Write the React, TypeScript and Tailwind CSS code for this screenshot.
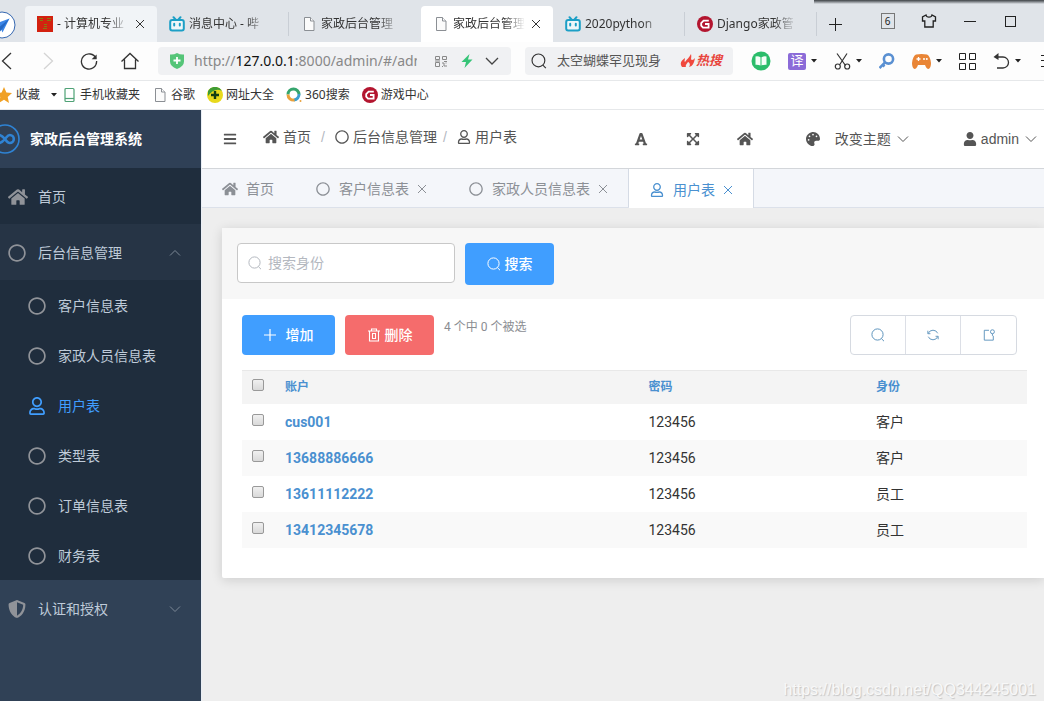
import { useState, type ReactNode } from "react";
import {
  FaBars,
  FaExpandArrowsAlt,
  FaFont,
  FaHome,
  FaPalette,
  FaRegCircle,
  FaRegUser,
  FaShieldAlt,
  FaUser,
} from "react-icons/fa";

type BrowserTab = { id: number; label: string; icon: ReactNode; closable?: boolean; state?: string };
type Row = { account: string; password: string; role: string };

const rows: Row[] = [
  { account: "cus001", password: "123456", role: "客户" },
  { account: "13688886666", password: "123456", role: "客户" },
  { account: "13611112222", password: "123456", role: "员工" },
  { account: "13412345678", password: "123456", role: "员工" },
];

const subMenu = ["客户信息表", "家政人员信息表", "用户表", "类型表", "订单信息表", "财务表"];

function Caret() {
  return (
    <svg viewBox="0 0 6 4" className="h-1 w-1.5" fill="#222">
      <path d="M0 0h6L3 3.6z" />
    </svg>
  );
}

function Close({ className }: { className?: string }) {
  return (
    <svg viewBox="0 0 10 10" className={className} fill="none" stroke="currentColor">
      <path d="M1 1l8 8M9 1L1 9" />
    </svg>
  );
}

function Chevron({ className }: { className?: string }) {
  return (
    <svg viewBox="0 0 12 8" className={className} fill="none" stroke="currentColor">
      <path d="M1 1.5l5 5 5-5" />
    </svg>
  );
}

function SearchIcon({ className }: { className?: string }) {
  return (
    <svg viewBox="0 0 14 14" className={className} fill="none" stroke="currentColor">
      <circle cx="6.5" cy="6.5" r="5.6" />
      <path d="M10.4 10.6l2.600 2.600" />
    </svg>
  );
}

function DocIcon() {
  return (
    <svg viewBox="0 0 16 16" className="h-4 w-4 shrink-0" fill="#fbfbfb" stroke="#8b8f94">
      <path d="M3.5 1.5h6l3.500 3.500v9.500h-9.500z" />
      <path d="M9.500 1.500v3.500h3.500" />
    </svg>
  );
}

function TvIcon() {
  return (
    <svg viewBox="0 0 16 16" className="h-4 w-4 shrink-0" fill="none" stroke="#1c9fc6" strokeWidth="2" strokeLinecap="round">
      <rect x="1.200" y="4" width="13.600" height="10.500" rx="2" fill="#eef6f9" />
      <path d="M4.500 1.200L6.500 3.500M11.500 1.200L9.500 3.500M5.200 7.800v1.600M10.800 7.800v1.600" />
    </svg>
  );
}

function GIcon() {
  return (
    <svg viewBox="0 0 16 16" className="h-4 w-4 shrink-0">
      <circle cx="8" cy="8" r="8" fill="#b3152f" />
      <path d="M11.800 4.600H6.600L4.200 7v2.600l1.800 2h5.600V8H8" fill="none" stroke="#fff" strokeWidth="1.800" />
    </svg>
  );
}

function RedSquare() {
  return (
    <svg viewBox="0 0 16 16" className="h-4 w-4 shrink-0">
      <path d="M0 0h16v16H0z" fill="#d3210f" />
      <path d="M2 2h4v1H2zM3 4h3v1H3zM10 2h4v1h-4zM10 4h4v1h-4zM7 8h3v1H7zM7 10h3v1H7zM6 12h4v1H6z" fill="#8a7a10" />
    </svg>
  );
}

const browserTabs: BrowserTab[] = [
  { id: 1, label: "- 计算机专业", icon: <RedSquare />, closable: true, state: "hover" },
  { id: 2, label: "消息中心 - 哔", icon: <TvIcon /> },
  { id: 3, label: "家政后台管理", icon: <DocIcon /> },
  { id: 4, label: "家政后台管理", icon: <DocIcon />, closable: true, state: "active" },
  { id: 5, label: "2020python", icon: <TvIcon /> },
  { id: 6, label: "Django家政管", icon: <GIcon /> },
];

function TabStrip() {
  return (
    <div className="relative flex h-[42px] overflow-hidden bg-[#e0e4e9] text-[#333]">
      <div className="absolute top-0 right-0 left-[78%] h-1 bg-linear-to-b from-[#3f4347] to-[#e0e4e9]" />
      <div className="-ml-3 w-[37px] shrink-0 pt-[11px]">
        <svg viewBox="0 0 28 28" className="h-7 w-7">
          <circle cx="14" cy="14" r="13" fill="#fff" stroke="#3567b0" />
          <path d="M21.500 7.500L7 13l5 2.500 2.500 6z" fill="#3b86e8" />
          <path d="M21.500 7.500L12 15.500v5l2.200-2.500z" fill="#2468c4" />
        </svg>
      </div>
      {browserTabs.map((t) => (
        <div
          key={t.id}
          className={[
            "mt-1.5 flex w-[132px] shrink-0 items-center gap-1 rounded-t-sm pl-3",
            t.state === "active" ? "bg-white" : t.state === "hover" ? "bg-[#f1f4f7]" : "",
          ].join(" ")}
        >
          {t.icon}
          <button
            className={[
              "shrink-0 overflow-hidden text-left text-xs whitespace-nowrap [mask-image:linear-gradient(to_right,black_70%,transparent)]",
              t.closable ? "w-[72px]" : "w-20",
            ].join(" ")}
          >
            {t.label}
          </button>
          {t.closable ? (
            <button aria-label="关闭">
              <Close className="ml-0.5 h-2.5 w-2.5" />
            </button>
          ) : (
            t.id !== 3 && <span className="ml-auto h-6 w-px bg-[#c9ced5]" />
          )}
        </div>
      ))}
      <button aria-label="新标签页" className="flex w-9 shrink-0 items-center justify-center pt-1.5 text-[#222]">
        <svg viewBox="0 0 14 14" className="h-3.5 w-3.5" stroke="currentColor">
          <path d="M7.500 1v13M1 7.500h13" />
        </svg>
      </button>
      <div className="-mr-7 ml-auto flex h-[42px] shrink-0 items-center text-[#222] *:flex *:w-[41px] *:items-center *:justify-center">
        <button>
          <span className="flex h-4 w-3.5 items-center justify-center border border-[#777] text-[10px]">6</span>
        </button>
        <button aria-label="皮肤">
          <svg viewBox="0 0 16 16" className="h-4 w-4" fill="none" stroke="currentColor" strokeWidth="1.300">
            <path d="M5 2L1.500 4v4h2.300v6h8.400V8h2.300V4L11 2c-.5 2.800-5.500 2.800-6 0z" />
          </svg>
        </button>
        <button aria-label="最小化">
          <span className="h-px w-3 bg-[#222]" />
        </button>
        <button aria-label="最大化">
          <span className="h-[11px] w-[11px] border border-[#222]" />
        </button>
        <button aria-label="关闭窗口">
          <Close className="h-4 w-4" />
        </button>
      </div>
    </div>
  );
}

function AddressBar() {
  return (
    <div className="flex h-[39px] items-center overflow-hidden border-b border-[#e6e8ea] bg-[#fdfdfd] text-[#333]">
      <div className="-ml-3.5 mr-2 flex shrink-0 *:flex *:w-[41px] *:justify-center">
        <button aria-label="后退">
          <svg viewBox="0 0 18 18" className="h-[18px] w-[18px]" fill="none" stroke="#333" strokeWidth="1.300">
            <path d="M13 1L4.500 9l8.500 8" />
          </svg>
        </button>
        <button aria-label="前进">
          <svg viewBox="0 0 18 18" className="h-[18px] w-[18px]" fill="none" stroke="#d4d4d4" strokeWidth="1.300">
            <path d="M5 1l8.500 8L5 17" />
          </svg>
        </button>
        <button aria-label="刷新">
          <svg viewBox="0 0 18 18" className="h-[18px] w-[18px]" fill="none" stroke="#333" strokeWidth="1.300">
            <path d="M16 6.500A7.600 7.600 0 1 0 16.600 9" />
            <path d="M16.600 2.500v4.700h-5z" fill="#333" strokeWidth="0" />
          </svg>
        </button>
        <button aria-label="主页">
          <svg viewBox="0 0 18 18" className="h-[18px] w-[18px]" fill="none" stroke="#333" strokeWidth="1.300">
            <path d="M.5 9.500L9 1.500l8.500 8M3.500 7.500v9h11v-9" />
          </svg>
        </button>
      </div>
      <div className="flex h-7 min-w-0 flex-1 items-center rounded bg-[#f0f1f3] px-3">
        <svg viewBox="0 0 14 16" className="h-4 w-3.5 shrink-0">
          <path d="M0 1.500Q4 1.800 7 0q3 1.800 7 1.500v7Q14 13 7 16 0 13 0 8.500z" fill="#55c578" />
          <path d="M7 4v7M3.500 7.500h7" stroke="#fff" strokeWidth="1.800" />
        </svg>
        <div className="ml-2.5 w-[223px] overflow-hidden text-sm whitespace-nowrap text-[#888]">
          http://<span className="text-[#111]">127.0.0.1</span>:8000/admin/#/admin
        </div>
        <svg viewBox="0 0 12 12" className="ml-auto h-3 w-3 shrink-0" fill="none" stroke="#888">
          <path d="M.5 1.500h4v3h-4zM7.500 1.500h4v3h-4zM.5 7.500h4v4h-4zM7 8h2v3h3M9 6.500h3M0 6h5M7 11.500h1M10.500 8h1" />
        </svg>
        <svg viewBox="0 0 12 14" className="ml-3.5 h-3.5 w-3 shrink-0" fill="#36c477">
          <path d="M8.500 0L.5 8H5l-1.500 6L11.500 5.500H7z" />
        </svg>
        <svg viewBox="0 0 14 8" className="ml-3 h-2 w-3.5 shrink-0" fill="none" stroke="#444" strokeWidth="1.300">
          <path d="M1 1l6 6 6-6" />
        </svg>
      </div>
      <div className="ml-3.5 flex h-7 w-52 shrink-0 items-center rounded bg-[#f0f1f3] pl-1.5">
        <SearchIcon className="h-4 w-4 text-[#333]" />
        <input
          aria-label="搜索网页"
          defaultValue="太空蝴蝶罕见现身"
          className="ml-2.5 w-[121px] bg-transparent text-[13px] text-[#555] outline-none"
        />
        <svg viewBox="0 0 16 14" className="ml-0.5 h-3.5 w-4" fill="#f0493e">
          <path d="M2 13C-1 9 2 6 5 4c0 2-1 3 0 4 2-3 4-4 6-8 1 4-1 5 1 6 1 0 2-1 3-2-1 5-2 8-6 9 2-3 0-5-1-5-1 2-3 3-2 5z" />
        </svg>
        <span className="text-[13px] font-bold text-[#e8453c] italic">热搜</span>
      </div>
      <div className="-mr-2.5 ml-[18px] flex shrink-0 items-center gap-[17px] *:flex *:items-center *:gap-[5px]">
        <button aria-label="阅读">
          <svg viewBox="0 0 20 20" className="h-5 w-5">
            <circle cx="10" cy="10" r="9.500" fill="#2bbd6b" />
            <path d="M4.500 5.500q3-.5 5 .8v8.200q-2-1-5-.8zM15.500 5.500q-3-.5-5 .8v8.200q2-1 5-.8z" fill="#f4fff8" />
          </svg>
        </button>
        <button>
          <span className="flex h-[17px] w-[18px] items-center justify-center rounded-xs bg-[#8b6bd8] text-[13px] text-white">
            译
          </span>
          <Caret />
        </button>
        <button aria-label="截图">
          <svg viewBox="0 0 17 17" className="h-[17px] w-[17px]" fill="none" stroke="#333" strokeWidth="1.200">
            <path d="M3 .5l8.500 12M13 .5L5.500 12" />
            <circle cx="3.800" cy="13.500" r="2.500" />
            <circle cx="13.200" cy="13.500" r="2.500" />
          </svg>
          <Caret />
        </button>
        <button aria-label="密码">
          <svg viewBox="0 0 16 16" className="h-4 w-4" fill="none" stroke="#5a90d2" strokeWidth="2.600">
            <circle cx="9.500" cy="6" r="4.600" />
            <path d="M6.300 9.200L.5 15M3 11l2.500 2.500" />
          </svg>
        </button>
        <button aria-label="游戏">
          <svg viewBox="0 0 19 15" className="h-[15px] w-[19px]">
            <path d="M4 .5q5.500-1 11 0 3 1 4 8.500 0 5-2.500 6-2 0-3.500-4H6q-1.500 4-3.500 4Q0 14 0 9 1 1.500 4 .5z" fill="#e98536" />
            <path d="M6.500 3v4M4.500 5h4" stroke="#fff" strokeWidth="1.300" />
            <circle cx="12" cy="5" r="1" fill="#fff" />
            <circle cx="14.800" cy="5" r="1" fill="#fff" />
          </svg>
          <Caret />
        </button>
        <button aria-label="应用">
          <svg viewBox="0 0 17 17" className="h-[17px] w-[17px]" fill="none" stroke="#222">
            <path d="M.5.5h6v6h-6zM10.500.5h6v6h-6zM.5 10.500h6v6h-6zM10.500 10.500h6v6h-6z" />
          </svg>
        </button>
        <button aria-label="撤销">
          <svg viewBox="0 0 17 16" className="h-4 w-[17px]" fill="none" stroke="#333" strokeWidth="1.300">
            <path d="M2 4h8a5.500 5.500 0 0 1 0 11H4" />
            <path d="M5.500 0v7L.5 4z" fill="#333" strokeWidth="0" />
          </svg>
          <Caret />
        </button>
        <button aria-label="菜单">
          <svg viewBox="0 0 16 14" className="h-3.5 w-4" stroke="#222">
            <path d="M3 1.500h13M3 6.500h13M3 12.500h13" />
          </svg>
        </button>
      </div>
    </div>
  );
}

function Bookmarks() {
  return (
    <nav className="flex h-[29px] items-center overflow-hidden border-b border-[#e6e8ea] bg-white text-xs text-[#333]">
      <div className="-ml-[5px] flex shrink-0 items-center gap-3 *:flex *:items-center *:gap-[3px]">
        <a href="#fav">
          <svg viewBox="0 0 18 16" className="h-4 w-[18px]" fill="#f0a024">
            <path d="M9 0l2.400 5.500 5.600.5-4.300 4 1.300 6L9 12.800 4 16l1.300-6L1 6l5.600-.5z" />
          </svg>
          收藏
          <span className="ml-2">
            <Caret />
          </span>
        </a>
        <a href="#mobile" className="-ml-2">
          <svg viewBox="0 0 16 16" className="h-4 w-4" fill="#fff" stroke="#4fa276" strokeWidth="1.200">
            <rect x="4" y="1.500" width="9" height="13" rx="1" />
            <path d="M4 11.500h9" />
          </svg>
          手机收藏夹
        </a>
        <a href="#google">
          <DocIcon />
          谷歌
        </a>
        <a href="#sites">
          <svg viewBox="0 0 16 16" className="h-4 w-4">
            <circle cx="8" cy="8" r="8" fill="#e8d91c" />
            <path d="M1 4A8 8 0 0 1 15 4Q8 0 1 9z" fill="#3e9b35" />
            <path d="M8 4v8M4 8h8" stroke="#123d14" strokeWidth="2.400" />
          </svg>
          网址大全
        </a>
        <a href="#so">
          <svg viewBox="0 0 16 16" className="h-4 w-4" fill="none" strokeWidth="3">
            <path d="M2 7.500A5.500 5.500 0 0 1 13 7.500" stroke="#35a56d" />
            <path d="M13 7A5.500 5.500 0 0 1 8 13" stroke="#3c9fd0" />
            <path d="M8.500 13A5.500 5.500 0 0 1 2 7.500" stroke="#e9a13b" />
            <circle cx="14.500" cy="14" r="1" fill="#e9a13b" strokeWidth="0" />
          </svg>
          360搜索
        </a>
        <a href="#games">
          <GIcon />
          游戏中心
        </a>
      </div>
    </nav>
  );
}

function Sidebar() {
  return (
    <aside className="flex w-[201px] shrink-0 flex-col bg-[#304156] text-sm text-[#bfcbd9]">
      <div className="flex h-[58px] items-center overflow-hidden bg-[#2f4056]">
        <svg viewBox="0 0 30 30" className="-ml-2.5 h-[30px] w-[30px] shrink-0" fill="none" stroke="#2f83d4">
          <circle cx="15" cy="15" r="14" strokeWidth="1.600" />
          <path
            d="M15 15c-2.500-3-4-4-6-4a4 4 0 0 0 0 8c2 0 3.500-1 6-4s3-4 4.800-4a4 4 0 0 1 0 8c-1.800 0-2.800-1-4.800-4z"
            strokeWidth="2.600"
          />
        </svg>
        <span className="ml-2.5 font-bold text-white">家政后台管理系统</span>
      </div>
      <a href="#home" className="flex h-14 items-center gap-2.5 bg-[#1f2d3d] pt-0.5 pl-2">
        <FaHome className="h-5 w-5 text-[#909399]" />
        首页
      </a>
      <button className="flex h-14 items-center gap-3 bg-[#263445] pt-0.5 pr-5 pl-2">
        <FaRegCircle className="h-[18px] w-[18px] text-[#909399]" />
        后台信息管理
        <Chevron className="ml-auto h-2 w-3 rotate-180 text-[#7c8896]" />
      </button>
      <ul className="bg-[#1f2d3d]">
        {subMenu.map((name) => {
          const active = name === "用户表";
          return (
            <li key={name}>
              <a
                href="#table"
                className={["flex h-[50px] items-center gap-3 pt-0.5 pl-7", active ? "text-[#409eff]" : ""].join(" ")}
              >
                {active ? (
                  <FaRegUser className="h-[18px] w-[18px]" />
                ) : (
                  <FaRegCircle className="h-[18px] w-[18px] text-[#909399]" />
                )}
                {name}
              </a>
            </li>
          );
        })}
      </ul>
      <button className="flex h-14 items-center gap-3 pt-0.5 pr-5 pl-2">
        <FaShieldAlt className="h-[18px] w-[18px] text-[#909399]" />
        认证和授权
        <Chevron className="ml-auto h-2 w-3 text-[#7c8896]" />
      </button>
    </aside>
  );
}

function TopBar() {
  return (
    <header className="flex h-[59px] items-center border-b border-[#d3d6da] bg-white pl-[21px] text-sm text-[#555]">
      <button aria-label="折叠菜单">
        <FaBars className="h-3.5 w-3.5" />
      </button>
      <nav className="ml-[26px] flex items-center gap-2 pb-1">
        <a href="#home" className="flex items-center gap-1">
          <FaHome className="h-4 w-4" />
          首页
        </a>
        <span className="w-2 text-center text-[#b4b8bf]">/</span>
        <a href="#info" className="flex items-center gap-1">
          <FaRegCircle className="h-3.5 w-3.5" />
          后台信息管理
        </a>
        <span className="-mx-1 w-2 text-center text-[#b4b8bf]">/</span>
        <a href="#table" className="ml-1 flex items-center gap-1">
          <FaRegUser className="h-3.5 w-3.5" />
          用户表
        </a>
      </nav>
      <div className="ml-auto flex items-center pr-[7px]">
        <button aria-label="字体" className="flex w-[52px] justify-center">
          <FaFont className="h-3.5 w-3.5" />
        </button>
        <button aria-label="全屏" className="flex w-[52px] justify-center">
          <FaExpandArrowsAlt className="h-3.5 w-3.5" />
        </button>
        <button aria-label="主页" className="flex w-[52px] justify-center">
          <FaHome className="h-4 w-4" />
        </button>
        <button className="ml-[34px] flex items-center">
          <FaPalette className="mr-3.5 h-3.5 w-4" />
          改变主题
          <Chevron className="ml-1.5 h-2 w-3" />
        </button>
        <button className="ml-[54px] flex items-center font-['Liberation_Sans',sans-serif]">
          <FaUser className="mr-1 h-3.5 w-3.5" />
          admin
          <Chevron className="ml-1.5 h-2 w-3" />
        </button>
      </div>
    </header>
  );
}

function PageTabs() {
  const tabs = [
    { label: "首页", icon: <FaHome className="h-4 w-4" />, closable: false },
    { label: "客户信息表", icon: <FaRegCircle className="h-3.5 w-4" />, closable: true },
    { label: "家政人员信息表", icon: <FaRegCircle className="h-3.5 w-4" />, closable: true },
    { label: "用户表", icon: <FaRegUser className="h-3.5 w-4" />, closable: true },
  ];
  return (
    <div className="flex h-[39px] border-b border-[#dce1ea] bg-[#f4f6fa] text-sm text-[#8c9096]">
      {tabs.map((t) => {
        const active = t.label === "用户表";
        return (
          <div
            key={t.label}
            className={[
              "flex items-center border-r px-5 pt-0.5",
              active ? "-mb-px border-[#d5dbe5] bg-white text-[#4a90d0]" : "border-transparent",
              t.label === "家政人员信息表" ? "border-r-[#d5dbe5]" : "",
            ].join(" ")}
          >
            <button className="flex items-center gap-2">
              {t.icon}
              {t.label}
            </button>
            {t.closable && (
              <button aria-label="关闭" className="ml-2">
                <Close className="h-2.5 w-2.5" />
              </button>
            )}
          </div>
        );
      })}
    </div>
  );
}

const boxClass =
  "block h-3 w-3 appearance-none rounded-xs border border-[#999] bg-linear-to-b from-[#f0f0f0] to-[#d9d9d9] checked:from-[#409eff] checked:to-[#409eff]";

function UserTable({ selected, onChange }: { selected: string[]; onChange: (s: string[]) => void }) {
  const toggle = (account: string) =>
    onChange(selected.includes(account) ? selected.filter((a) => a !== account) : [...selected, account]);

  return (
    <table className="mt-[15px] w-full table-fixed border-collapse text-left text-sm text-[#333]">
      <thead>
        <tr className="h-[33px] border-t border-[#e8e8e8] bg-[#f4f4f4] text-xs text-[#4a90d0]">
          <th className="w-[33px] pb-1 pl-2.5">
            <input
              type="checkbox"
              aria-label="全选"
              className={boxClass}
              checked={selected.length === rows.length}
              onChange={(e) => onChange(e.target.checked ? rows.map((r) => r.account) : [])}
            />
          </th>
          <th className="px-2.5">账户</th>
          <th className="w-[29%] px-2.5">密码</th>
          <th className="w-[20.500%] px-2.5">身份</th>
        </tr>
      </thead>
      <tbody>
        {rows.map((r) => (
          <tr key={r.account} className="h-9 even:bg-[#f9f9f9]">
            <td className="pb-1 pl-2.5">
              <input
                type="checkbox"
                aria-label={r.account}
                className={boxClass}
                checked={selected.includes(r.account)}
                onChange={() => toggle(r.account)}
              />
            </td>
            <td className="px-2.5">
              <a href="#edit" className="font-bold text-[#4a90d0]">
                {r.account}
              </a>
            </td>
            <td className="px-2.5">{r.password}</td>
            <td className="px-2.5">{r.role}</td>
          </tr>
        ))}
      </tbody>
    </table>
  );
}

function UserPanel() {
  const [query, setQuery] = useState("");
  const [selected, setSelected] = useState<string[]>([]);

  return (
    <section className="mt-5 ml-5 rounded-l-xs bg-white pb-[30px] font-[Roboto,'Noto_Sans_CJK_SC',sans-serif] shadow-[0_2px_12px_rgba(0,0,0,0.14)]">
      <form className="flex h-[71px] gap-2.5 bg-[#f7f7f7] pt-[15px] pl-[15px]" onSubmit={(e) => e.preventDefault()}>
        <label className="flex h-10 w-[218px] items-center gap-1.5 rounded border border-[#c8c8c8] bg-white pl-2.5 text-[#b4b8bf]">
          <SearchIcon className="h-3.5 w-3.5 shrink-0" />
          <input
            value={query}
            onChange={(e) => setQuery(e.target.value)}
            placeholder="搜索身份"
            aria-label="搜索身份"
            className="w-full bg-transparent text-sm text-[#333] outline-none placeholder:text-[#b4b8bf]"
          />
        </label>
        <button className="flex h-[42px] w-[89px] items-center justify-center gap-1 rounded bg-[#409eff] text-sm font-medium text-white">
          <SearchIcon className="h-3.5 w-3.5" />
          搜索
        </button>
      </form>

      <div className="pt-4 pr-[17px] pl-5">
        <div className="flex gap-2.5">
          <button className="flex h-10 w-[93px] items-center justify-center gap-2.5 rounded bg-[#409eff] text-sm font-medium text-white">
            <svg viewBox="0 0 12 12" className="h-3 w-3" stroke="currentColor" strokeWidth="1.200">
              <path d="M6 0v12M0 6h12" />
            </svg>
            增加
          </button>
          <button className="flex h-10 w-[89px] items-center justify-center gap-1 rounded bg-[#f56c6c] text-sm font-medium text-white">
            <svg viewBox="0 0 14 14" className="h-3.5 w-3.5" fill="none" stroke="currentColor" strokeWidth="1.100">
              <path d="M1 3h12M4.500 3V1h5v2M2.500 3v10h9V3M5.500 5.500h3v5h-3z" />
            </svg>
            删除
          </button>
          <span className="pt-1 text-xs text-[#8a8d92]">
            {rows.length} 个中 {selected.length} 个被选
          </span>
          <div className="mr-2.5 ml-auto flex h-10 divide-x divide-[#dcdfe6] rounded border border-[#d6dae1] text-[#5e94bd] *:flex *:w-[55px] *:items-center *:justify-center">
            <button aria-label="搜索">
              <SearchIcon className="h-3.5 w-3.5" />
            </button>
            <button aria-label="刷新">
              <svg viewBox="0 0 14 14" className="h-3 w-3" fill="none" stroke="currentColor" strokeWidth="1.100">
                <path d="M1 2v3.500h3M1.500 5a6 6 0 0 1 11 0M13 12V8.500h-3M12.500 9a6 6 0 0 1-11 0" />
              </svg>
            </button>
            <button aria-label="导出">
              <svg viewBox="0 0 14 14" className="h-3 w-3" fill="none" stroke="currentColor" strokeWidth="1.100">
                <path d="M7 1.500H1.500v11.500h10.500V8" />
                <circle cx="11" cy="3.200" r="2.300" />
                <path d="M11 5.500V8" />
              </svg>
            </button>
          </div>
        </div>
        <UserTable selected={selected} onChange={setSelected} />
      </div>
    </section>
  );
}

export default function App() {
  return (
    <div className="relative flex min-h-screen flex-col overflow-hidden bg-white font-['Noto_Sans','Noto_Sans_CJK_SC',sans-serif]">
      <TabStrip />
      <AddressBar />
      <Bookmarks />
      <div className="flex flex-1 font-['Liberation_Sans','Noto_Sans_CJK_SC',sans-serif]">
        <Sidebar />
        <main className="flex min-w-0 flex-1 flex-col border-l border-[#e9eef5] bg-[#eeeeee]">
          <TopBar />
          <PageTabs />
          <UserPanel />
        </main>
      </div>
      <div className="h-[7px]" />
      <div className="absolute right-2 bottom-1.5 font-['Liberation_Sans',sans-serif] text-base text-[#f8f8f8] [text-shadow:1px_1px_1px_#c4c4c4]">
        https://blog.csdn.net/QQ344245001
      </div>
    </div>
  );
}
